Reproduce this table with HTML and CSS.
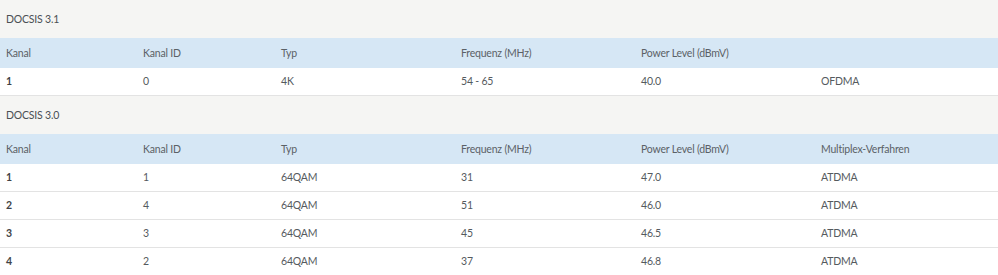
FILE: index.html
```html
<!DOCTYPE html>
<html lang="de">
<head>
<meta charset="utf-8">
<title>DOCSIS</title>
<link rel="stylesheet" href="styles.css">
</head>
<body>
<section class="block">
  <div class="title">DOCSIS 3.1</div>
  <div class="row head">
    <div>Kanal</div><div>Kanal ID</div><div>Typ</div><div>Frequenz (MHz)</div><div>Power Level (dBmV)</div><div></div>
  </div>
  <div class="row">
    <div class="num">1</div><div>0</div><div>4K</div><div>54 - 65</div><div>40.0</div><div>OFDMA</div>
  </div>
</section>
<section class="block">
  <div class="title">DOCSIS 3.0</div>
  <div class="row head">
    <div>Kanal</div><div>Kanal ID</div><div>Typ</div><div>Frequenz (MHz)</div><div>Power Level (dBmV)</div><div>Multiplex-Verfahren</div>
  </div>
  <div class="row">
    <div class="num">1</div><div>1</div><div>64QAM</div><div>31</div><div>47.0</div><div>ATDMA</div>
  </div>
  <div class="row">
    <div class="num">2</div><div>4</div><div>64QAM</div><div>51</div><div>46.0</div><div>ATDMA</div>
  </div>
  <div class="row">
    <div class="num">3</div><div>3</div><div>64QAM</div><div>45</div><div>46.5</div><div>ATDMA</div>
  </div>
  <div class="row">
    <div class="num">4</div><div>2</div><div>64QAM</div><div>37</div><div>46.8</div><div>ATDMA</div>
  </div>
</section>
</body>
</html>
```
FILE: styles.css
```css
html, body {
  margin: 0;
  padding: 0;
  background: #ffffff;
}
body {
  font-family: Lato, "Noto Sans", sans-serif;
  font-size: 10.5px;
  letter-spacing: -0.2px;
  color: #555a5e;
}
.title {
  height: 38px;
  line-height: 38px;
  padding-left: 6px;
  background: #f5f5f3;
  color: #4a4f54;
}
.row {
  display: grid;
  grid-template-columns: 137px 138px 180px 180px 180px 1fr;
  height: 27px;
  line-height: 27px;
  border-bottom: 1px solid #e3e3e3;
  padding-left: 6px;
}
.row.head {
  height: 30px;
  line-height: 30px;
  background: #d6e7f5;
  border-bottom: none;
  color: #5b6166;
}
.num {
  font-weight: bold;
  color: #3f4347;
}
```
